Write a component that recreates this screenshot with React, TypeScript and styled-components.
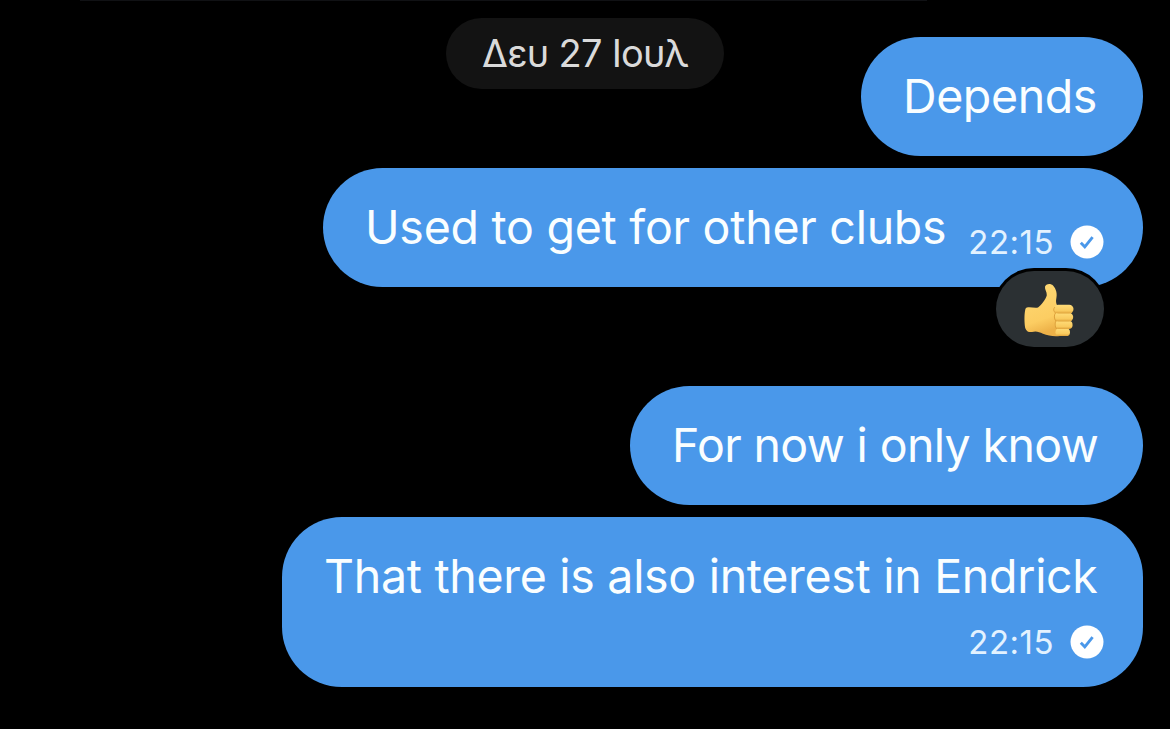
import React from "react";
import styled, {createGlobalStyle} from "styled-components";

export default function App() {
	return (
		<>
			<GlobalStyle />
			<Chat>
				<DateBadge>
					<Label size={38} spacing={-0.75}>Δευ 27 Ιουλ</Label>
				</DateBadge>
				<Messages>
					<Bubble width={282}>
						<Label size={46.5} spacing={-0.4}>Depends</Label>
					</Bubble>
					<Bubble width={820}>
						<Label size={46.5} spacing={-0.26}>Used to get for other clubs</Label>
						<Status />
						<Reaction>
							<ThumbIcon />
						</Reaction>
					</Bubble>
					<Bubble width={513} spaced>
						<Label size={46.5} spacing={-0.64}>For now i only know</Label>
					</Bubble>
					<Bubble width={861} tall>
						<Label size={46.5} spacing={-0.3}>That there is also interest in Endrick</Label>
						<Status />
					</Bubble>
				</Messages>
			</Chat>
		</>
	);
}

const Status = () => (
	<Meta>
		<Time>22:15</Time>
		<svg width="34" height="34" viewBox="0 0 34 34">
			<circle cx="17" cy="17" r="16.5" fill="#fff" />
			<path d="M10.8 17.8l4 4 7.8-9.6" fill="none" stroke="#4a98ea" strokeWidth="2.9" />
		</svg>
	</Meta>
);

const ThumbIcon = () => (
	<svg width="60" height="60" viewBox="0 0 60 60">
		<defs>
			<linearGradient id="skin" x1="0" y1="0" x2="0.25" y2="1">
				<stop offset="0" stopColor="#ffda76" />
				<stop offset="0.75" stopColor="#fccd62" />
				<stop offset="1" stopColor="#edb148" />
			</linearGradient>
			<linearGradient id="finger" x1="0" y1="0" x2="0" y2="1">
				<stop offset="0" stopColor="#ffdc78" />
				<stop offset="0.7" stopColor="#f9ca5e" />
				<stop offset="1" stopColor="#dfa23a" />
			</linearGradient>
		</defs>
		<path
			d="M7 27.5C10 26.6 14 28.2 18 27.5C21 25.5 26 19 26.8 15.2C27 12 24.6 9.5 25 6.8C25.5 3.8 30.5 2.8 33 5.5C36.5 9.5 37.3 14 36.3 18.5C35.8 21 36 23 37 25.2L42 27V50L40 56C34 56.5 28 56 23 53.8C19 51.8 16 50.8 12 52C9 52.5 6.2 51.4 5.2 48C4.2 42 4.3 34 5.2 30C5.5 28.5 6 27.8 7 27.5Z"
			fill="url(#skin)"
		/>
		<rect x="35.5" y="48.3" width="14.5" height="7.8" rx="3.9" fill="url(#finger)" />
		<rect x="34.8" y="40.8" width="17.8" height="8.2" rx="4.1" fill="url(#finger)" />
		<rect x="34.2" y="32.8" width="19" height="8.6" rx="4.3" fill="url(#finger)" />
		<rect x="34" y="24.8" width="19.5" height="8.6" rx="4.3" fill="url(#finger)" />
		<path
			d="M35 27C33 29 33.5 31 35.5 33C33.8 35 34 39 36 41C34.6 43 35 47 36.5 49"
			fill="none"
			stroke="#d99c37"
			strokeWidth="0.9"
		/>
	</svg>
);

const GlobalStyle = createGlobalStyle`
	* {
		box-sizing: border-box;
	}

	body {
		margin: 0;
		background-color: #000;
		font-family: Inter, "Liberation Sans", sans-serif;
	}
`;

const Chat = styled.main`
	position: relative;
	height: 729px;
	padding: 37px 27px 0 0;
	overflow: hidden;
	background-color: #000;

	&::before {
		content: "";
		position: absolute;
		top: 0;
		left: 80px;
		width: 847px;
		height: 1px;
		background-color: #101114;
	}
`;

const DateBadge = styled.div`
	position: absolute;
	top: 18px;
	left: 446px;
	width: 278px;
	height: 71px;
	padding-bottom: 1px;
	border-radius: 36px;
	background-color: #131313;
	color: #dadada;

	display: flex;
	justify-content: center;
	align-items: center;
`;

const Messages = styled.div`
	display: flex;
	flex-direction: column;
	align-items: flex-end;
	gap: 12px;
`;

const Bubble = styled.div<{width: number; tall?: boolean; spaced?: boolean}>`
	position: relative;
	width: ${({width}) => width}px;
	height: ${({tall}) => (tall ? 170 : 119)}px;
	margin-top: ${({spaced}) => (spaced ? 87 : 0)}px;
	padding: 29px 39px 0 42px;
	border-radius: 60px;
	background-color: #4a98ea;
	color: #fafeff;

	display: flex;
	flex-wrap: wrap;
	justify-content: space-between;
	align-content: flex-start;
`;

const Label = styled.span<{size: number; spacing: number}>`
	font-size: ${({size}) => size}px;
	font-weight: 400;
	line-height: 60px;
	letter-spacing: ${({spacing}) => spacing}px;
	white-space: nowrap;
`;

const Meta = styled.div`
	height: 34px;
	margin-top: 28px;
	margin-left: auto;

	display: flex;
	align-items: center;
	gap: 16px;

	${Bubble}:last-child & {
		margin-top: 19px;
	}
`;

const Time = styled.span`
	font-size: 33px;
	letter-spacing: 0.5px;
	color: #e3f2ff;
`;

const Reaction = styled.div`
	position: absolute;
	top: 103px;
	right: 39px;
	width: 108px;
	height: 76px;
	padding-top: 2px;
	border-radius: 38px;
	background-color: #2b3033;
	box-shadow: 0 0 0 3px #000;

	display: flex;
	justify-content: center;
	align-items: center;
`;
